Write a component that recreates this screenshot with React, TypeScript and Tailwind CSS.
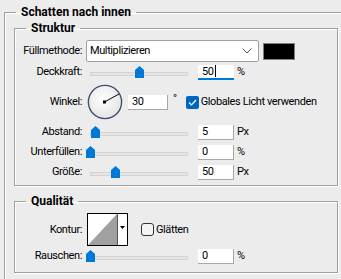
import React from "react";

const FONT = { fontFamily: "Roboto, 'Liberation Sans', sans-serif" };

function Thumb({ left }: { left: number }) {
  return (
    <svg
      className="absolute top-[4px]"
      style={{ left }}
      width="9"
      height="12"
      viewBox="0 0 9 12"
    >
      <polygon points="0,4 4.5,0 9,4 9,12 0,12" fill="#0078d7" />
    </svg>
  );
}

function Slider({ thumb }: { thumb: number }) {
  return (
    <div className="relative w-[107px] h-[20px] ml-[4px]">
      <div className="absolute left-[4px] top-[10px] w-[98px] h-[4px] bg-[#e5e5e5] border border-[#d4d4d4]" />
      <Thumb left={thumb} />
    </div>
  );
}

function Input({ value, focused, w = 36 }: { value: string; focused?: boolean; w?: number }) {
  return (
    <div
      className={
        "h-[15px] bg-white flex items-center pl-[4px] leading-none text-black " +
        (focused ? "border-b-2 border-[#0078d7]" : "border-b border-r border-[#a8a8a8]")
      }
      style={{ width: w }}
    >
      <span>{value}</span>
      {focused && <span className="inline-block w-px h-[12px] bg-black ml-px" />}
    </div>
  );
}

function Label({ children }: { children: React.ReactNode }) {
  return <div className="w-[67px] text-right whitespace-nowrap shrink-0">{children}</div>;
}

function SliderRow({
  label,
  thumb,
  value,
  unit,
  focused,
}: {
  label: string;
  thumb: number;
  value: string;
  unit: string;
  focused?: boolean;
}) {
  return (
    <div className="flex items-center h-[20px]">
      <Label>{label}</Label>
      <Slider thumb={thumb} />
      <div className="ml-[5px]">
        <Input value={value} focused={focused} />
      </div>
      <div className="ml-[3px]">{unit}</div>
    </div>
  );
}

function Dial() {
  return (
    <svg width="36" height="36" viewBox="0 0 36 36" className="ml-[5px]">
      <defs>
        <radialGradient id="dg" cx="45%" cy="40%" r="60%">
          <stop offset="0%" stopColor="#ffffff" />
          <stop offset="100%" stopColor="#e4e4e4" />
        </radialGradient>
      </defs>
      <circle cx="18" cy="18" r="16.6" fill="url(#dg)" stroke="#3f4f70" strokeWidth="1.4" />
      <line x1="17.5" y1="18" x2="32" y2="10" stroke="#000" strokeWidth="1" />
      <rect x="16" y="16.5" width="3" height="3" fill="#000" />
    </svg>
  );
}

function Checkbox({ checked }: { checked?: boolean }) {
  if (checked) {
    return (
      <div className="w-[13px] h-[13px] rounded-[2px] bg-[#0067c0] flex items-center justify-center">
        <svg width="9" height="7" viewBox="0 0 9 7">
          <path d="M1 3.5 L3.5 6 L8 1" stroke="#fff" strokeWidth="1.2" fill="none" />
        </svg>
      </div>
    );
  }
  return <div className="w-[13px] h-[13px] rounded-[3px] border border-[#333] bg-[#f4f4f4]" />;
}

const boxEtch = "shadow-[inset_1px_1px_0_#ffffff,1px_1px_0_#ffffff]";

export default function App() {
  return (
    <div
      className="w-[341px] h-[279px] overflow-hidden bg-[#ececec] text-[11px] tracking-[-0.4px] leading-[16px] text-black"
      style={FONT}
    >
      <fieldset className={"ml-[4px] mt-[4px] w-[400px] border border-[#a0a0a0] pb-[40px] " + boxEtch}>
        <legend className="ml-[11px] px-[5px] font-bold text-[12px] tracking-normal leading-[16px]">Schatten nach innen</legend>

        <fieldset className={"ml-[9px] w-[324px] border border-[#a0a0a0] pb-[3px] " + boxEtch}>
          <legend className="ml-[11px] px-[5px] font-bold text-[12px] tracking-normal leading-[16px]">Struktur</legend>
          <div className="pt-[4px]">
            <div className="flex items-center h-[22px]">
              <Label>Füllmethode:</Label>
              <div className="ml-[4px] w-[173px] h-[22px] bg-white border border-[#a0a0a0] rounded-[2px] flex items-center pl-[3px] pr-[6px] justify-between">
                <span>Multiplizieren</span>
                <svg width="10" height="6" viewBox="0 0 10 6">
                  <path d="M0.5 0.5 L5 5 L9.5 0.5" stroke="#555" strokeWidth="1" fill="none" />
                </svg>
              </div>
              <div className="ml-[4px] w-[32px] h-[17px] bg-black border border-[#808080]" />
            </div>

            <SliderRow label="Deckkraft:" thumb={49} value="50" unit="%" focused />

            <div className="flex items-center h-[40px]">
              <Label>Winkel:</Label>
              <Dial />
              <div className="ml-[5px]">
                <Input value="30" w={40} />
              </div>
              <div className="ml-[5px] self-start mt-[11px] leading-none">°</div>
              <div className="ml-[9px]">
                <Checkbox checked />
              </div>
              <div className="ml-[2px] whitespace-nowrap">Globales Licht verwenden</div>
            </div>

            <SliderRow label="Abstand:" thumb={5} value="5" unit="Px" />
            <SliderRow label="Unterfüllen:" thumb={0} value="0" unit="%" />
            <SliderRow label="Größe:" thumb={25} value="50" unit="Px" />
          </div>
        </fieldset>

        <fieldset className={"ml-[9px] mt-[7px] w-[324px] border border-[#a0a0a0] pb-[6px] " + boxEtch}>
          <legend className="ml-[11px] px-[5px] font-bold text-[12px] tracking-normal leading-[16px]">Qualität</legend>
          <div className="pt-[4px]">
            <div className="flex items-center h-[33px]">
              <Label>Kontur:</Label>
              <div className="ml-[5px] w-[41px] h-[33px] border border-black bg-white flex">
                <svg width="29" height="31" viewBox="0 0 29 31" className="shrink-0">
                  <rect width="29" height="31" fill="#fff" />
                  <polygon points="0,31 29,0 29,31" fill="#a0a0a0" />
                </svg>
                <div className="w-px bg-[#555]" />
                <div className="flex-1 flex justify-center pt-[12px]">
                  <svg width="5" height="3" viewBox="0 0 5 3">
                    <polygon points="0,0 5,0 2.5,3" fill="#000" />
                  </svg>
                </div>
              </div>
              <div className="ml-[13px]">
                <Checkbox />
              </div>
              <div className="ml-[2px]">Glätten</div>
            </div>
            <SliderRow label="Rauschen:" thumb={0} value="0" unit="%" />
          </div>
        </fieldset>
      </fieldset>
    </div>
  );
}
